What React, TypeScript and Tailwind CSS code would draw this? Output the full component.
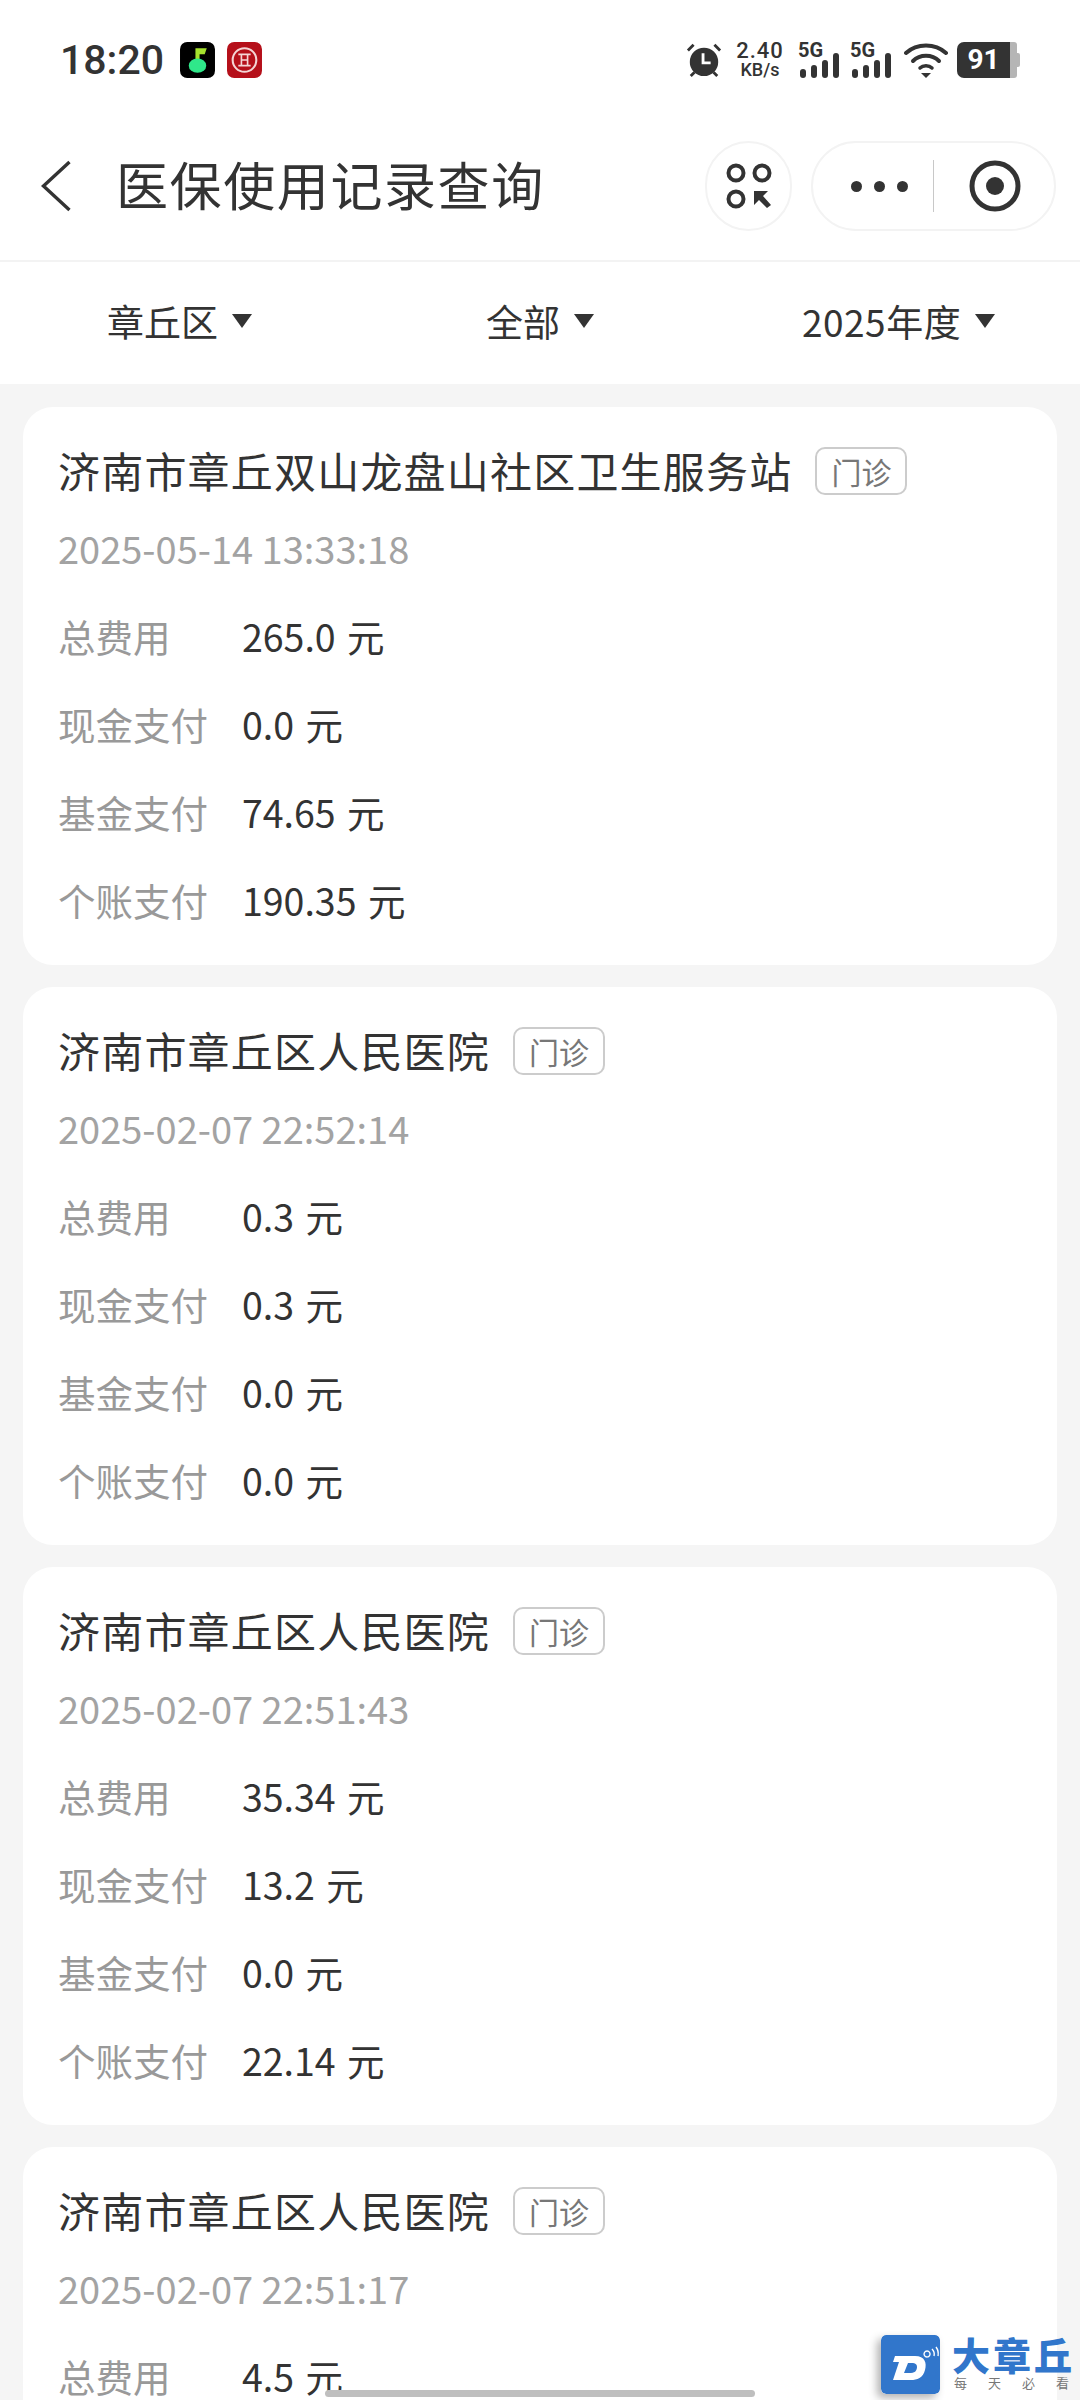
import React from 'react';

type Record = {
    hospital: string;
    time: string;
    total: string;
    cash?: string;
    fund?: string;
    personal?: string;
};

const records: Record[] = [
    { hospital: '济南市章丘双山龙盘山社区卫生服务站', time: '2025-05-14 13:33:18', total: '265.0 元', cash: '0.0 元', fund: '74.65 元', personal: '190.35 元' },
    { hospital: '济南市章丘区人民医院', time: '2025-02-07 22:52:14', total: '0.3 元', cash: '0.3 元', fund: '0.0 元', personal: '0.0 元' },
    { hospital: '济南市章丘区人民医院', time: '2025-02-07 22:51:43', total: '35.34 元', cash: '13.2 元', fund: '0.0 元', personal: '22.14 元' },
    // last card runs off the bottom of the screen
    { hospital: '济南市章丘区人民医院', time: '2025-02-07 22:51:17', total: '4.5 元' },
];

const Caret = () => (
    <svg width="20" height="14" viewBox="0 0 20 14" className="ml-[14px]">
        <path d="M0 0 H20 L10 14 Z" fill="#333" />
    </svg>
);

const Signal = () => (
    <div className="relative w-[43px] h-[38px]">
        <span className="absolute left-0 top-[-1px] text-[20px] leading-[20px] font-bold text-[#333] font-['Roboto',sans-serif]">5G</span>
        <svg width="40" height="26" viewBox="0 0 40 26" className="absolute left-[2px] top-[12px]">
            <rect x="0" y="16" width="6" height="9" rx="3" fill="#333" />
            <rect x="11" y="12" width="6" height="13" rx="3" fill="#333" />
            <rect x="22" y="7" width="6" height="18" rx="3" fill="#333" />
            <rect x="33" y="0" width="6" height="25" rx="3" fill="#333" />
        </svg>
    </div>
);

const StatusBar = () => (
    <div className="h-[106px] flex items-center justify-between pl-[60px] pr-[60px] pt-[14px]">
        <div className="flex items-center">
            <span className="text-[41px] leading-none font-medium text-[#333] font-['Roboto',sans-serif]">18:20</span>
            <svg width="35" height="36" viewBox="0 0 34 35" className="ml-[16px]">
                <rect width="34" height="35" rx="7" fill="#000" />
                <path d="M15 6 H26 L24 12 H19 V20 H15 Z" fill="#a6e22e" />
                <ellipse cx="17" cy="23" rx="8.5" ry="7" fill="#2fe88a" />
            </svg>
            <svg width="35" height="36" viewBox="0 0 34 35" className="ml-[12px]">
                <rect width="34" height="35" rx="7" fill="#b5101a" />
                <circle cx="17" cy="17.5" r="11.5" fill="none" stroke="#f4d5d5" strokeWidth="2" />
                <path d="M11 12 H23 M11 23 H23 M14 17.5 H20 M14 12 V23 M20 12 V23" stroke="#f4d5d5" strokeWidth="1.6" fill="none" />
            </svg>
        </div>
        <div className="flex items-center">
            <svg width="36" height="38" viewBox="0 0 38 38">
                <circle cx="19" cy="21" r="15" fill="#333" />
                <path d="M18 12 V22 H26" stroke="#fff" strokeWidth="3" fill="none" />
                <path d="M2 9 L8 3 M36 9 L30 3 M5 36 L9 32 M33 36 L29 32" stroke="#333" strokeWidth="3" />
            </svg>
            <div className="ml-[14px] w-[48px] flex flex-col items-center font-['Roboto',sans-serif] font-medium text-[#333]">
                <span className="text-[22px] leading-[20px] tracking-[1px]">2.40</span>
                <span className="text-[18px] leading-[18px]">KB/s</span>
            </div>
            <div className="ml-[14px]"><Signal /></div>
            <div className="ml-[9px]"><Signal /></div>
            <svg width="44" height="38" viewBox="0 0 44 38" className="ml-[11px]">
                <path d="M2 12 C13 2 31 2 42 12" stroke="#333" strokeWidth="4" strokeLinecap="round" fill="none" />
                <path d="M9 20 C16 13 28 13 35 20" stroke="#333" strokeWidth="4" strokeLinecap="round" fill="none" />
                <path d="M16 27 C19 24 25 24 28 27" stroke="#333" strokeWidth="3.5" strokeLinecap="round" fill="none" />
                <path d="M17 32 H27 L22 37 Z" fill="#333" />
            </svg>
            <div className="ml-[9px] flex items-center">
                <div className="w-[53px] h-[36px] rounded-l-[7px] bg-[#333] flex items-center justify-center text-white text-[28px] font-bold font-['Roboto',sans-serif]">91</div>
                <div className="w-[7px] h-[36px] bg-[#b5b5b5] rounded-r-[3px]" />
                <div className="w-[3px] h-[14px] bg-[#b5b5b5] rounded-r-[2px]" />
            </div>
        </div>
    </div>
);

const Header = () => (
    <div className="h-[157px] border-b-2 border-[#f3f3f3] flex items-center pt-[7px] -mt-[1px]">
        <svg width="34" height="52" viewBox="0 0 34 54" className="ml-[39px]">
            <path d="M31 2 L4 27 L31 52" stroke="#333" strokeWidth="3.5" fill="none" />
        </svg>
        <h1 className="ml-[43px] -mt-[5px] text-[52px] leading-none font-normal text-[#333] tracking-[1.6px]">医保使用记录查询</h1>
        <div className="ml-auto mr-[24px] flex items-center">
            <div className="w-[87px] h-[90px] rounded-full border-2 border-[#f3f3f3] flex items-center justify-center">
                <svg width="46" height="46" viewBox="0 0 46 46">
                    <circle cx="10" cy="10" r="7.5" stroke="#333" strokeWidth="4" fill="none" />
                    <circle cx="36" cy="10" r="7.5" stroke="#333" strokeWidth="4" fill="none" />
                    <circle cx="10" cy="36" r="7.5" stroke="#333" strokeWidth="4" fill="none" />
                    <path d="M28 28 H42 L37 33 L45 42 L41 45 L33 37 L28 42 Z" fill="#333" />
                </svg>
            </div>
            <div className="ml-[19px] w-[245px] h-[90px] rounded-full border-2 border-[#f3f3f3] flex items-center pl-[38px]">
                <div className="flex items-center gap-[12px]">
                    <span className="w-[11px] h-[11px] rounded-full bg-[#333]" />
                    <span className="w-[11px] h-[11px] rounded-full bg-[#333]" />
                    <span className="w-[11px] h-[11px] rounded-full bg-[#333]" />
                </div>
                <div className="ml-[25px] w-px h-[52px] bg-[#c8c8c8]" />
                <svg width="52" height="52" viewBox="0 0 52 52" className="ml-[35px]">
                    <circle cx="26" cy="26" r="23" stroke="#333" strokeWidth="5" fill="none" />
                    <circle cx="26" cy="26" r="9" fill="#333" />
                </svg>
            </div>
        </div>
    </div>
);

const FilterBar = () => (
    <div className="h-[122px] pb-[4px] flex items-center bg-white text-[37px] leading-none text-[#333]">
        <div className="ml-[107px] flex items-center">章丘区<Caret /></div>
        <div className="ml-[234px] flex items-center">全部<Caret /></div>
        <div className="ml-[208px] flex items-center tracking-[0.5px]">2025年度<Caret /></div>
    </div>
);

const Row = ({ label, value }: { label: string; value?: string }) => {
    if (!value) return null;
    return (
        <div className="h-[88px] flex items-center text-[37.5px] leading-none">
            <span className="w-[184px] text-[#999]">{label}</span>
            <span className="text-[#333] [word-spacing:3px]">{value}</span>
        </div>
    );
};

const RecordCard = ({ record }: { record: Record }) => (
    <div className="bg-white rounded-[30px] h-[558px] shrink-0 px-[35px] pt-[33px]">
        <div className="flex items-center h-[60px]">
            <span className="text-[42px] leading-none text-[#333] tracking-[1.2px]">{record.hospital}</span>
            <span className="ml-[23px] mt-[2px] w-[92px] h-[48px] border-2 border-[#ccc] rounded-[10px] flex items-center justify-center text-[30px] leading-none text-[#777]">门诊</span>
        </div>
        <div className="h-[40px] mt-[28px] flex items-center text-[38px] leading-none text-[#a3a3a3]">{record.time}</div>
        <div className="mt-[24px]">
            <Row label="总费用" value={record.total} />
            <Row label="现金支付" value={record.cash} />
            <Row label="基金支付" value={record.fund} />
            <Row label="个账支付" value={record.personal} />
        </div>
    </div>
);

const Watermark = () => (
    <div className="absolute left-[881px] top-[2335px] flex items-start">
        <svg width="59" height="59" viewBox="0 0 59 59" className="rounded-[5px] shadow-[-4px_4px_8px_rgba(0,0,0,0.3)]">
            <rect width="59" height="59" rx="5" fill="#3176cb" />
            <path d="M14 21 H34 C44 21 46 28 44 35 C42 43 36 45 30 45 H12 L18 27 H12 Z M27 28 L23 38 H30 C35 38 36 34 36 32 C36 29 34 28 31 28 Z" fill="#fff" fillRule="evenodd" />
            <path d="M46 22 a3 3 0 1 1 0.1 0 M51 14 q3 3 2 7 M55 12 q3 4 2 9" stroke="#fff" strokeWidth="1.4" fill="none" />
        </svg>
        <div className="ml-[12px] flex flex-col">
            <span className="text-[38px] leading-[38px] font-black text-[#3176cb] whitespace-nowrap tracking-[3px]">大章丘</span>
            <span className="text-[13px] leading-[16px] mt-[2px] text-[#777] whitespace-nowrap tracking-[21px] ml-[2px]">每天必看</span>
        </div>
    </div>
);

export default function App() {
    return (
        <div className="relative w-[1080px] h-[2400px] overflow-hidden bg-[#f5f5f5] font-['Noto_Sans_CJK_SC','Noto_Sans',sans-serif]">
            <div className="bg-white">
                <StatusBar />
                <Header />
                <FilterBar />
            </div>
            <div className="px-[23px] pt-[23px] flex flex-col gap-[22px]">
                {records.map((r) => (
                    <RecordCard key={r.time} record={r} />
                ))}
            </div>
            <Watermark />
            <div className="absolute left-[325px] top-[2390px] w-[430px] h-[7px] rounded-full bg-[#bfbfbf]" />
        </div>
    );
}
